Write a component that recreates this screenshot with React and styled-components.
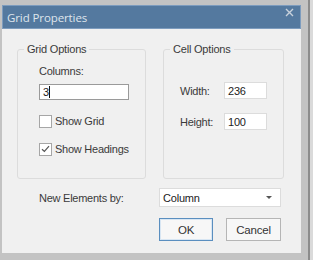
import React from 'react'
import styled, { createGlobalStyle } from 'styled-components'

const GlobalStyle = createGlobalStyle`
  html, body {
    margin: 0;
    padding: 0;
    background: #dadada;
  }
  body {
    font-family: "Liberation Sans", Arial, sans-serif;
    font-size: 11px;
    color: #3a3a3a;
  }
`

const Screen = styled.div`
  width: 313px;
  height: 260px;
  overflow: hidden;
  background: #dadada;
`

const Frame = styled.div`
  width: 306px;
  height: 256px;
  background: #c3c3c3;
  border-right: 2px solid #8c8c8c;
  border-bottom: 2px solid #8c8c8c;
  padding: 5px 0 0 2px;
  box-sizing: content-box;
  display: flex;
  align-items: flex-start;
`

const Dialog = styled.div`
  width: 299px;
  height: 248px;
  background: #f0f0f0;
  display: flex;
  flex-direction: column;
`

const TitleBar = styled.div`
  height: 24px;
  box-sizing: border-box;
  background: #54799f;
  border: 1px solid #7d9cbe;
  display: flex;
  align-items: center;
  justify-content: space-between;
  padding: 0 6px 0 4px;
`

const Title = styled.span`
  font-family: "Open Sans", "Liberation Sans", sans-serif;
  font-size: 11.5px;
  color: #dfe5ec;
  letter-spacing: -0.1px;
`

const Close = styled.svg`
  align-self: flex-start;
  margin-top: 2px;
`

const Body = styled.div`
  flex: 1;
  padding: 13px 17px 0 15px;
  display: flex;
  flex-direction: column;
`

const Groups = styled.div`
  display: flex;
  gap: 17px;
`

const Group = styled.fieldset`
  margin: 0;
  padding: 0;
  width: ${({ $w }) => $w}px;
  height: 137px;
  box-sizing: border-box;
  min-width: 0;
  border: 1px solid #dcdcdc;
  border-radius: 3px;
`

const Legend = styled.legend`
  margin-left: 6px;
  padding: 0 3px;
  line-height: 14px;
  font-size: 11px;
  letter-spacing: -0.2px;
  color: #3a3a3a;
`

const GroupContent = styled.div`
  padding: ${({ $pad }) => $pad};
  display: flex;
  flex-direction: column;
  align-items: flex-start;
`

const Label = styled.span`
  line-height: 14px;
  letter-spacing: -0.25px;
  width: ${({ $w }) => ($w ? `${$w}px` : 'auto')};
`

const TextBox = styled.div`
  width: ${({ $w }) => $w}px;
  height: ${({ $h }) => $h}px;
  box-sizing: border-box;
  margin-top: ${({ $mt }) => $mt || 0}px;
  background: #fff;
  border: 1px solid ${({ $focus }) => ($focus ? '#9a9a9a' : '#dcdcdc')};
  display: flex;
  align-items: center;
  padding-left: 3px;
  color: #222;
  letter-spacing: -0.2px;
`

const Caret = styled.span`
  width: 1px;
  height: 12px;
  background: #111;
`

const CheckRow = styled.div`
  display: flex;
  align-items: center;
  gap: 3px;
  height: 14px;
  margin-top: 14px;
`

const Box = styled.span`
  width: 13px;
  height: 13px;
  box-sizing: border-box;
  background: #fff;
  border: 1px solid #a6a6a6;
  display: flex;
  align-items: center;
  justify-content: center;
`

const FieldRow = styled.div`
  display: flex;
  align-items: center;
  margin-top: ${({ $mt }) => $mt}px;
`

const BottomRow = styled.div`
  display: flex;
  align-items: center;
  padding-left: 22px;
  margin-top: ${({ $mt }) => $mt}px;
`

const Select = styled.div`
  width: 122px;
  height: 19px;
  box-sizing: border-box;
  background: #fff;
  border: 1px solid #dcdcdc;
  display: flex;
  align-items: center;
  justify-content: space-between;
  padding: 0 8px 0 3px;
  color: #222;
  letter-spacing: -0.2px;
`

const Arrow = styled.span`
  width: 0;
  height: 0;
  border-left: 3px solid transparent;
  border-right: 3px solid transparent;
  border-top: 3px solid #555;
`

const Buttons = styled.div`
  display: flex;
  justify-content: flex-end;
  gap: 13px;
  padding-right: 3px;
  margin-top: 11px;
`

const Button = styled.button`
  width: ${({ $w }) => $w}px;
  height: 23px;
  box-sizing: border-box;
  background: #f7f7f7;
  border: 1px solid ${({ $default }) => ($default ? '#5a8ebf' : '#b5b5b5')};
  box-shadow: ${({ $default }) => ($default ? 'inset 0 0 0 1px #d8e6f3' : 'none')};
  font-family: "Liberation Sans", Arial, sans-serif;
  font-size: 11.5px;
  color: #333;
  letter-spacing: -0.2px;
  padding: 0;
`

const CheckMark = () => (
  <svg width='9' height='8' viewBox='0 0 9 8'>
    <path d='M1 4.2 L3.4 6.5 L8 1.2' fill='none' stroke='#555' strokeWidth='1.2' />
  </svg>
)

export default function App () {
  return <Screen>
    <GlobalStyle />
    <Frame>
      <Dialog>
        <TitleBar>
          <Title>Grid Properties</Title>
          <Close width='9' height='9' viewBox='0 0 9 9'>
            <path d='M1 1 L8 8 M8 1 L1 8' stroke='#c9d2dc' strokeWidth='1.4' />
          </Close>
        </TitleBar>
        <Body>
          <Groups>
            <Group $w={129}>
              <Legend>Grid Options</Legend>
              <GroupContent $pad='8px 0 0 21px'>
                <Label>Columns:</Label>
                <TextBox $w={90} $h={16} $mt={6} $focus>3<Caret /></TextBox>
                <CheckRow>
                  <Box />
                  <Label>Show Grid</Label>
                </CheckRow>
                <CheckRow>
                  <Box><CheckMark /></Box>
                  <Label>Show Headings</Label>
                </CheckRow>
              </GroupContent>
            </Group>
            <Group $w={121}>
              <Legend>Cell Options</Legend>
              <GroupContent $pad='26px 0 0 16px'>
                <FieldRow $mt={0}>
                  <Label $w={44}>Width:</Label>
                  <TextBox $w={43} $h={17}>236</TextBox>
                </FieldRow>
                <FieldRow $mt={14}>
                  <Label $w={44}>Height:</Label>
                  <TextBox $w={43} $h={17}>100</TextBox>
                </FieldRow>
              </GroupContent>
            </Group>
          </Groups>
          <BottomRow $mt={9}>
            <Label $w={120}>New Elements by:</Label>
            <Select>Column<Arrow /></Select>
          </BottomRow>
          <Buttons>
            <Button $w={54} $default>OK</Button>
            <Button $w={55}>Cancel</Button>
          </Buttons>
        </Body>
      </Dialog>
    </Frame>
  </Screen>
}
